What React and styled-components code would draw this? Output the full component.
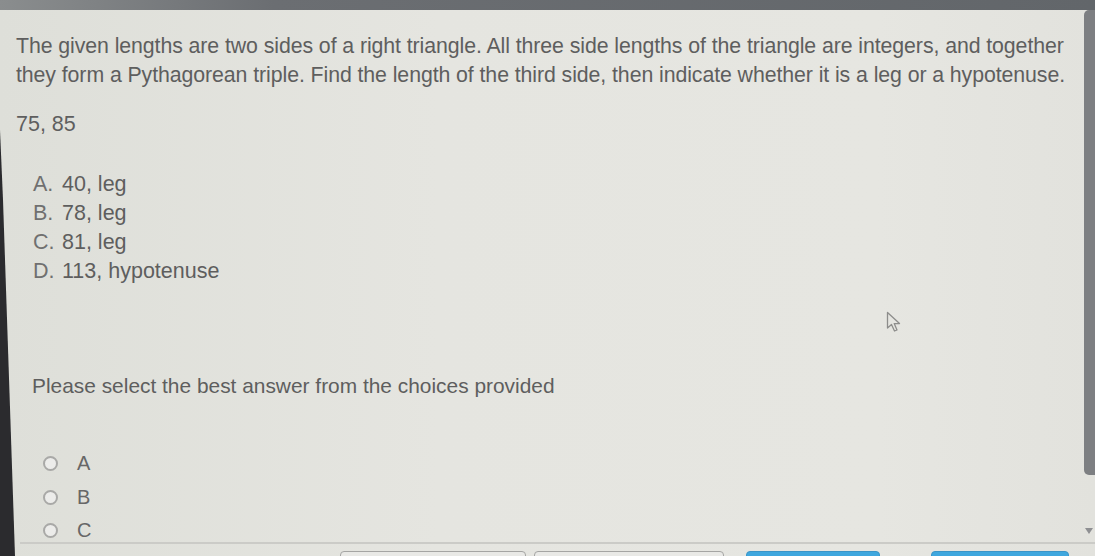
import React from 'react';
import styled, { createGlobalStyle } from 'styled-components';

const GlobalStyle = createGlobalStyle`
	html, body {
		margin: 0;
		padding: 0;
		background: #e3e3de;
		overflow: hidden;
	}
	body {
		font-family: "Liberation Sans", Arial, sans-serif;
	}
`

const Screen = styled.div`
	position: relative;
	width: 1095px;
	height: 556px;
	display: flex;
	flex-direction: column;
	background: linear-gradient(90deg, #dedfd9 0%, #e5e5e0 40%, #e6e6e1 80%, #e2e2dd 100%);
	overflow: hidden;
	color: #5e5e5e;
`

const TopBar = styled.div`
	height: 10px;
	flex: none;
	background: linear-gradient(90deg, #8a8d8e 0%, #6b6e72 25%, #62666a 100%);
`

const Body = styled.div`
	display: flex;
	height: 532px;
	flex: none;
`

const Content = styled.div`
	flex: 1;
	overflow: hidden;
	padding: 22px 0 0 16px;
	font-size: 21px;
	line-height: 29px;
`

const Question = styled.p`
	margin: 0;
	white-space: nowrap;
	font-size: 21.3px;
	letter-spacing: -0.08px;
`

const Given = styled.p`
	margin: 20px 0 0;
	font-size: 21.5px;
`

const ChoiceList = styled.div`
	margin-top: 31px;
	padding-left: 17px;
	font-size: 21.5px;
`

const Choice = styled.div`
	display: flex;
`

const ChoiceLetter = styled.span`
	width: 29px;
	flex: none;
	color: #707070;
`

const Prompt = styled.p`
	margin: 85px 0 0 16px;
	font-size: 20.9px;
	white-space: nowrap;
`

const RadioList = styled.div`
	margin-top: 47px;
	padding-left: 27px;
`

const RadioRow = styled.label`
	display: flex;
	align-items: center;
	height: 33.5px;
	font-size: 20px;
	color: #676767;
`

const RadioCircle = styled.span`
	width: 11px;
	height: 11px;
	border: 2px solid #a9a9a7;
	border-radius: 50%;
	background: #ececea;
	margin-right: 19px;
	flex: none;
`

const ScrollTrack = styled.div`
	width: 14px;
	flex: none;
	display: flex;
	flex-direction: column;
	align-items: flex-end;
`

const ScrollThumb = styled.div`
	width: 11px;
	height: 465px;
	background: #7d7f82;
	border-radius: 5px 0 0 5px;
`

const ScrollArrow = styled.div`
	margin-top: auto;
	margin-bottom: 8px;
	margin-right: 2px;
	width: 0;
	height: 0;
	border-left: 4px solid transparent;
	border-right: 4px solid transparent;
	border-top: 6px solid #8e8f92;
`

const Footer = styled.div`
	border-top: 2px solid #cbcbc7;
	margin-left: 20px;
	flex: 1;
	display: flex;
	align-items: flex-start;
	padding-top: 7px;
`

const FooterButton = styled.div`
	box-sizing: border-box;
	height: 20px;
	width: ${p => p.$w}px;
	margin-left: ${p => p.$ml}px;
	border: 1px solid ${p => (p.$primary ? '#3b95c8' : '#a5a5a3')};
	background: ${p => (p.$primary ? '#3fa7de' : '#e9e9e6')};
	border-radius: 4px 4px 0 0;
	flex: none;
`

const LeftShadow = styled.div`
	position: absolute;
	left: 0;
	top: 0;
	width: 18px;
	height: 556px;
	background: #2b2b2e;
	clip-path: polygon(0 130px, 3px 200px, 15px 556px, 0 556px);
	pointer-events: none;
`

const Cursor = styled.svg`
	position: absolute;
	left: 886px;
	top: 311px;
	pointer-events: none;
`

const choices = [
	['A.', '40, leg'],
	['B.', '78, leg'],
	['C.', '81, leg'],
	['D.', '113, hypotenuse'],
];

const App = () => {
	return (
		<Screen>
			<GlobalStyle />
			<TopBar />
			<Body>
				<Content>
					<Question>
						The given lengths are two sides of a right triangle. All three side lengths of the triangle are integers, and together
						<br />
						they form a Pythagorean triple. Find the length of the third side, then indicate whether it is a leg or a hypotenuse.
					</Question>
					<Given>75, 85</Given>
					<ChoiceList>
						{choices.map(([letter, text]) => (
							<Choice key={letter}>
								<ChoiceLetter>{letter}</ChoiceLetter>
								<span>{text}</span>
							</Choice>
						))}
					</ChoiceList>
					<Prompt>Please select the best answer from the choices provided</Prompt>
					<RadioList>
						{['A', 'B', 'C'].map(l => (
							<RadioRow key={l}>
								<RadioCircle />
								{l}
							</RadioRow>
						))}
					</RadioList>
				</Content>
				<ScrollTrack>
					<ScrollThumb />
					<ScrollArrow />
				</ScrollTrack>
			</Body>
			<Footer>
				<FooterButton $w={186} $ml={320} />
				<FooterButton $w={190} $ml={8} />
				<FooterButton $w={134} $ml={22} $primary />
				<FooterButton $w={138} $ml={51} $primary />
			</Footer>
			<LeftShadow />
			<Cursor width="18" height="22" viewBox="0 0 18 22">
				<path d="M1.5 1.5 L1.5 17 L5.5 13.5 L8.5 20 L11 19 L8.2 12.6 L13.5 12.6 Z" fill="none" stroke="#8d8d8b" strokeWidth="1.3" strokeLinejoin="round" />
			</Cursor>
		</Screen>
	);
};

export default App;
